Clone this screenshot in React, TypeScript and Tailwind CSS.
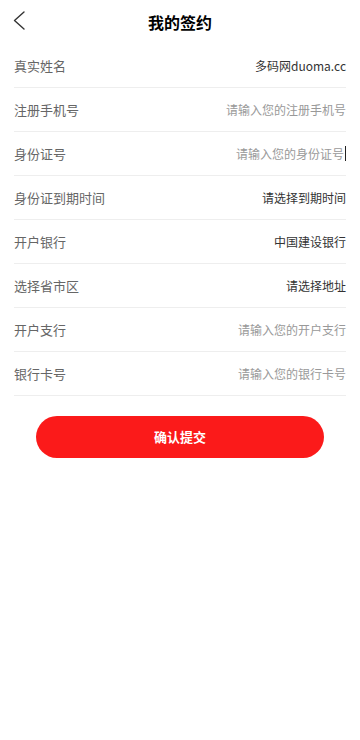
const rows: Array<{ label: string; value: string; placeholder?: boolean; caret?: boolean }> = [
  { label: '真实姓名', value: '多码网duoma.cc' },
  { label: '注册手机号', value: '请输入您的注册手机号', placeholder: true },
  { label: '身份证号', value: '请输入您的身份证号', placeholder: true, caret: true },
  { label: '身份证到期时间', value: '请选择到期时间' },
  { label: '开户银行', value: '中国建设银行' },
  { label: '选择省市区', value: '请选择地址' },
  { label: '开户支行', value: '请输入您的开户支行', placeholder: true },
  { label: '银行卡号', value: '请输入您的银行卡号', placeholder: true },
];

export default function App() {
  return (
    <div
      className="min-h-[740px] w-[360px] bg-white"
      style={{ fontFamily: '"Noto Sans CJK SC", "Noto Sans", sans-serif' }}
    >
      {/* header */}
      <div className="relative flex h-[44px] items-center justify-center">
        <svg
          className="absolute left-[12px] top-[10px]"
          width="14"
          height="21"
          viewBox="0 0 14 21"
          fill="none"
        >
          <path d="M12 2 L2.5 10.5 L12 19" stroke="#333" strokeWidth="1.4" strokeLinecap="round" strokeLinejoin="round" />
        </svg>
        <h1 className="text-[16px] font-bold text-black">我的签约</h1>
      </div>

      {/* form */}
      <div className="px-[14px]">
        {rows.map((row) => (
          <div
            key={row.label}
            className="flex h-[44px] items-center justify-between border-b border-[#eeeeee]"
          >
            <span className="text-[13px] text-[#666]">{row.label}</span>
            <span className="flex items-center">
              <span className={`text-[12px] ${row.placeholder ? 'text-[#999]' : 'text-[#333]'}`}>
                {row.value}
              </span>
              {row.caret && <span className="ml-px h-[15px] w-px bg-[#222]" />}
            </span>
          </div>
        ))}
      </div>

      <div className="flex justify-center pt-[20px]">
        <button className="flex h-[42px] w-[288px] items-center justify-center rounded-full bg-[#fb1a1a] text-[13px] font-bold text-white">
          确认提交
        </button>
      </div>
    </div>
  );
}
